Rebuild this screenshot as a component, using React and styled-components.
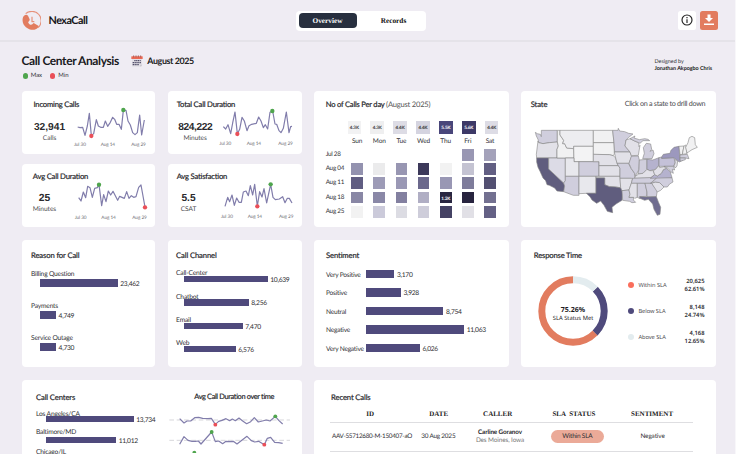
import React from "react";
import styled, { createGlobalStyle } from "styled-components";

const Global = createGlobalStyle`
  * { box-sizing: border-box; }
  html, body { margin: 0; padding: 0; overflow: hidden; }
  body {
    background: #efecf3;
    font-family: Lato, sans-serif;
    color: #252529;
    text-rendering: geometricPrecision;
  }
  button { text-rendering: geometricPrecision; }
`;

const serif = '"Liberation Serif", serif';
const noto = '"Noto Sans", sans-serif';
const indigo = "#4f4a7c";

const Page = styled.div`
  width: 736px;
  height: 454px;
  overflow: hidden;
  background: #efecf3;
  border-right: 1px solid #f8f7fa;
`;

const Text = styled.span`
  display: block;
  white-space: ${(p) => (p.$pre ? "pre" : "nowrap")};
  font-family: ${(p) => p.$font || "inherit"};
  font-size: ${(p) => p.$size}px;
  line-height: ${(p) => p.$line || 8}px;
  font-weight: ${(p) => p.$weight || 400};
  letter-spacing: ${(p) => p.$track || 0}px;
  color: ${(p) => p.$color || "#303035"};
  -webkit-text-stroke: ${(p) => p.$stroke || 0}px currentColor;
`;

/* Header */
const TopBar = styled.header`
  display: grid;
  grid-template-columns: 274px 1fr auto;
  height: 42px;
  padding: 11px 17px 0 21.5px;
  border-bottom: 2px solid #e5e3e9;
`;
const Brand = styled.div`
  display: flex;
  align-items: center;
  gap: 8.5px;
  height: 20px;
`;
const Tabs = styled.nav`
  display: flex;
  width: 130px;
  height: 20px;
  padding: 2.4px 3px;
  background: #fff;
  border-radius: 4px;
`;
const Tab = styled.button`
  flex: 0 0 ${(p) => p.$width}px;
  height: 15px;
  padding: 0;
  border: 0;
  border-radius: 4px;
  background: ${(p) => (p.$active ? "#28303f" : "transparent")};
  color: ${(p) => (p.$active ? "#fff" : "#111")};
  font: bold 7.3px/14px ${serif};
`;
const Actions = styled.div`
  display: flex;
  gap: 3.8px;
`;
const ActionButton = styled.button`
  display: grid;
  place-items: center;
  width: 18.2px;
  height: 18.8px;
  padding: 0;
  border: 0;
  border-radius: 2.5px;
  background: ${(p) => (p.$primary ? "#e27c5f" : "#fff")};
`;

/* Title strip */
const Heading = styled.section`
  display: flex;
  justify-content: space-between;
  height: 49px;
  padding: 10px 22px 0 21.5px;
`;
const TitleRow = styled.div`
  display: flex;
  align-items: center;
  height: 17px;
`;
const MonthPick = styled.div`
  display: flex;
  align-items: center;
  gap: 4px;
  margin-left: 12.5px;
`;
const MarkerLegend = styled.div`
  display: flex;
  align-items: center;
  margin-top: 3px;
  padding-left: 1px;
  height: 8px;
`;
const Dot = styled.i`
  flex: none;
  width: ${(p) => p.$d}px;
  height: ${(p) => p.$d}px;
  border-radius: 50%;
  background: ${(p) => p.$color};
  margin-right: ${(p) => p.$gap || 0}px;
  margin-left: ${(p) => p.$before || 0}px;
`;
const Credit = styled.div`
  width: 58.5px;
  padding-top: 6.5px;
`;

/* Cards */
const Board = styled.main`
  display: grid;
  grid-template-columns: 133.5px 134px 194.5px 195px;
  grid-template-rows: 62.5px 62.5px 127.5px 100px;
  column-gap: 12.5px;
  row-gap: 10.5px;
  padding-left: 21.5px;
`;
const Card = styled.article`
  grid-column: ${(p) => p.$col || "auto"};
  grid-row: ${(p) => p.$row || "auto"};
  margin-top: ${(p) => p.$drop || 0}px;
  margin-bottom: ${(p) => -(p.$drop || 0)}px;
  background: #fff;
  border-radius: 4px;
  padding: ${(p) => p.$pad || "0"};
  overflow: hidden;
`;
const CardHead = styled.div`
  display: flex;
  justify-content: space-between;
  height: ${(p) => p.$h || 14}px;
  padding-left: ${(p) => p.$indent || 0}px;
`;
const LightPart = styled.span`
  color: #555;
  -webkit-text-stroke: 0;
`;

const KpiBody = styled.div`
  display: grid;
  grid-template-columns: ${(p) => p.$split}px 80px;
`;
const KpiFigure = styled.div`
  width: 50px;
  margin-left: ${(p) => p.$indent}px;
  padding-top: ${(p) => p.$top}px;
  text-align: center;
`;
const KpiChart = styled.svg`
  display: block;
  margin-top: ${(p) => p.$lift}px;
  width: 80px;
  height: 43.33px;
  text { font: 14.2px Lato, sans-serif; letter-spacing: -0.3px; fill: #6d6d73; }
`;

/* Heatmap */
const TotalsRow = styled.div`
  display: grid;
  grid-template-columns: repeat(7, 22.9px);
  justify-items: center;
  margin: 9.5px 0 4.2px 17.2px;
`;
const DayRow = styled.div`
  display: grid;
  grid-template-columns: 20.4px repeat(7, 22.15px);
  justify-items: center;
  align-items: center;
  height: ${(p) => p.$h || 14.3}px;
  > :first-child { justify-self: start; }
`;
const HeatBody = styled.div`
  margin-top: 1.2px;
`;
const HeatCell = styled.div`
  display: grid;
  place-items: center;
  width: ${(p) => p.$size || 11.7}px;
  height: ${(p) => p.$size || 11.7}px;
  background: ${(p) => p.$fill};
  color: ${(p) => (p.$light ? "#fff" : "#333")};
  font-size: 4.6px;
  line-height: 6px;
  letter-spacing: -0.1px;
  -webkit-text-stroke: 0.12px currentColor;
`;

const MapSvg = styled.svg`
  display: block;
  width: 166.67px;
  height: 93.33px;
  margin: 14.8px 0 0 2.8px;
  path { stroke: #858585; stroke-width: 1.8; stroke-linejoin: round; }
`;

/* Bars */
const StackedBar = styled.div`
  height: ${(p) => p.$pitch}px;
`;
const BarLine = styled.div`
  display: flex;
  align-items: center;
  height: ${(p) => p.$h}px;
  margin-top: ${(p) => p.$lift || 0}px;
  margin-left: ${(p) => p.$indent || 0}px;
`;
const Bar = styled.div`
  flex: none;
  width: ${(p) => p.$w}px;
  height: 100%;
  margin-right: 2.6px;
  background: ${indigo};
`;
const BarValue = styled(Text)`
  padding-top: 1.4px;
`;
const SentimentRow = styled.div`
  display: grid;
  grid-template-columns: 40.1px 1fr;
  align-items: center;
  height: 18.55px;
`;

/* Response time */
const Response = styled.div`
  display: grid;
  grid-template-columns: 70px 1fr;
  column-gap: 20.6px;
  padding-left: 4px;
`;
const Donut = styled.svg`
  width: 70px;
  height: 70px;
  margin-top: 14.3px;
  text { text-anchor: middle; fill: #1c1c1f; font-family: ${noto}; }
`;
const SlaRow = styled.div`
  display: grid;
  grid-template-columns: 10px 1fr auto;
  align-items: center;
  height: 26px;
  text-align: right;
  > :nth-child(2) { text-align: left; padding-top: 1px; }
`;
const SlaList = styled.div`
  padding: 10.2px 11.5px 0 0;
`;

/* Call centres */
const Centers = styled.div`
  display: grid;
  grid-template-columns: 132.3px 123.4px;
`;
const CenterCharts = styled.svg`
  display: block;
  width: 123.33px;
  height: 40.67px;
  margin-top: 8.8px;
`;

/* Table */
const TableRow = styled.div`
  display: grid;
  grid-template-columns: ${(p) => p.$cols};
  align-items: center;
  justify-items: center;
  height: ${(p) => p.$h}px;
  width: 363.3px;
  border-bottom: 1px solid #dedee1;
  text-align: center;
`;
const Pill = styled.span`
  width: 53.5px;
  height: 12.8px;
  border-radius: 7px;
  background: #ebaa98;
  display: grid;
  place-items: center;
`;

const purpleLine = { fill: "none", stroke: "#817dab", strokeWidth: 3.6, strokeLinejoin: "round" };

const kpis = [
  {
    title: "Incoming Calls", left: 12, value: "32,941", size: 10.2, track: 0, unit: "Calls", center: 28, split: 50.2, row: 1, col: 1,
    box: "170 60 240 130", labelY: 182, labels: [[176, "Jul 30"], [256, "Aug 14"], [348, "Aug 29"]],
    line: "187,126 194,128 202,127 209,151 216,123 222,85 228,152 235,146 243,104 249,123 256,127 264,127 270,108 277,124 285,112 292,97 298,103 304,118 311,118 318,133 324,76 332,76 338,108 345,120 352,143 359,149 366,143 373,90 379,150 387,105",
    max: [324, 75], min: [228, 153],
  },
  {
    title: "Total Call Duration", left: 9.2, value: "824,222", size: 10.2, track: -0.4, unit: "Minutes", center: 27.7, split: 49.2, row: 1, col: 2,
    box: "170 60 240 130", labelY: 180, labels: [[177, "Jul 30"], [259, "Aug 14"], [354, "Aug 29"]],
    line: "189,125 196,132 203,119 211,146 217,114 224,81 231,146 238,133 245,97 252,108 260,137 266,122 274,118 288,115 295,96 302,108 309,128 315,119 322,132 329,82 337,78 344,117 349,118 356,137 362,143 369,130 378,81 386,143 391,125 395,124",
    max: [336, 78], min: [231, 147],
  },
  {
    title: "Avg Call Duration", left: 11.3, value: "25", size: 10.3, track: 0, unit: "Minutes", center: 23, split: 50.2, row: 2, col: 1,
    box: "170 285 240 130", labelY: 401, labels: [[178, "Jul 30"], [258, "Aug 14"], [351, "Aug 29"]],
    line: "190,338 197,348 204,321 211,338 217,304 224,308 231,337 238,310 246,308 251,299 259,362 265,329 272,350 279,318 286,330 293,319 307,346 313,334 327,340 334,320 341,340 348,332 355,337 362,335 370,307 377,300 389,366",
    max: [251, 299], min: [389, 367],
  },
  {
    title: "Avg Satisfaction", left: 9.2, value: "5.5", size: 10.2, track: 0, unit: "CSAT", center: 21, split: 49.2, row: 2, col: 2,
    box: "170 285 240 130", labelY: 398, labels: [[182, "Jul 30"], [262, "Aug 14"], [356, "Aug 29"]],
    line: "194,364 202,337 208,350 215,330 222,361 229,339 236,352 243,352 249,321 257,318 264,332 270,302 277,330 283,298 291,363 298,320 305,336 311,311 319,354 331,298 338,337 345,344 357,342 367,335 374,353 381,340 387,340 395,354",
    max: [331, 298], min: [291, 364],
  },
];

const Title = ({ children, size = 7.7, track = -0.14 }) => (
  <Text $size={size} $line={14} $track={track} $stroke={0.18} $color="#232327">{children}</Text>
);
const Value = ({ children }) => <BarValue $size={6.7} $track={-0.3} $color="#2c2c30">{children}</BarValue>;
const Label = ({ children }) => <Text $size={6.7} $track={-0.2}>{children}</Text>;

function Kpi({ k }) {
  const first = k.row === 1;
  return (
    <Card $col={k.col} $row={k.row} $pad={`${first ? 6 : 4.8}px 0 0 0`}>
      <CardHead $h={14} $indent={k.left}><Title track={-0.22}>{k.title}</Title></CardHead>
      <KpiBody $split={k.split}>
        <KpiFigure $indent={k.center - 25} $top={10.5}>
          <Text $font='"Liberation Sans", sans-serif' $size={k.size} $line={12} $weight={700} $track={k.track} $color="#2b2b2e">{k.value}</Text>
          <Text $size={6.6} $line={9} $track={-0.05} $color="#4c4c50">{k.unit}</Text>
        </KpiFigure>
        <KpiChart $lift={first ? -6 : -2.8} viewBox={k.box}>
          <polyline points={k.line} {...purpleLine} />
          <circle cx={k.max[0]} cy={k.max[1]} r="6.5" fill="#4fa54d" />
          <circle cx={k.min[0]} cy={k.min[1]} r="6.5" fill="#ea4f58" />
          {k.labels.map(([x, t]) => <text key={t} x={x} y={k.labelY}>{t}</text>)}
        </KpiChart>
      </KpiBody>
    </Card>
  );
}

const totals = [
  ["4.3K", "#f2f2f3"], ["4.3K", "#efeff0"], ["4.4K", "#dddce5"], ["4.4K", "#d5d4e0"],
  ["5.5K", "#49467a"], ["5.6K", "#3d3967"], ["4.4K", "#dddce5"],
];
const days = ["Sun", "Mon", "Tue", "Wed", "Thu", "Fri", "Sat"];
const weeks = [
  ["Jul 28", [null, null, null, null, null, "#9997b3", "#a4a2ba"]],
  ["Aug 04", ["#9392af", "#ebebec", "#9896b2", "#3c395a", "#f2f2f2", "#c4c3d2", "#625f83"]],
  ["Aug 11", ["#605d82", "#9d9bb7", "#9a98b5", "#6b688c", "#9997b4", "#7e7c9b", "#535072"]],
  ["Aug 18", ["#8987a5", "#8a88a7", "#8380a0", "#b0aec4", "#292641", "#28243f", "#737090"]],
  ["Aug 25", ["#f2f2f2", "#cbcada", "#dcdce3", "#cecdda", "#454264", "#e1e0e6", "#646185"]],
];

const mid = "#d0cedd", pale = "#e2e1e8", faint = "#f1f1f2", dark = "#605d7e";
const states = [
  ["WA", mid, "62,139 68,143 77,145 80,152 80,133 128,133 128,168 104,170 85,173 72,170 70,160 65,150"],
  ["OR", pale, "70,165 72,170 85,173 104,170 128,168 131,180 127,190 127,216 66,216 65,205"],
  ["CA", dark, "66,216 102,216 102,249 147,291 150,300 147,317 127,315 120,306 104,298 97,296 93,284 85,276 76,256 70,244 66,228"],
  ["NV", "#dcdbe6", "102,216 152,216 152,284 147,291 102,249"],
  ["ID", faint, "128,133 136,133 136,147 147,163 144,173 150,173 156,186 177,188 178,216 127,216 127,190 131,180 128,168"],
  ["MT", "#ededf0", "136,133 236,133 236,181 177,181 177,188 156,186 150,173 144,173 147,163 136,147"],
  ["WY", "#f3f3f4", "177,181 236,181 236,227 178,227"],
  ["UT", "#e8e8ed", "152,216 178,216 178,227 193,227 193,271 152,271"],
  ["CO", mid, "193,227 253,227 253,271 193,271"],
  ["AZ", mid, "152,271 193,271 193,328 176,328 147,317 150,300 147,291 152,284"],
  ["NM", "#e8e8ed", "193,271 244,271 244,322 215,322 193,323"],
  ["ND", faint, "236,133 294,133 298,170 236,170"],
  ["SD", faint, "236,170 298,170 299,204 296,209 284,206 236,205"],
  ["NE", pale, "236,205 284,206 296,209 303,216 310,239 253,239 253,227 236,227"],
  ["KS", pale, "253,239 312,239 316,247 316,271 253,271"],
  ["OK", pale, "244,271 316,271 318,305 302,303 284,302 270,296 270,276 244,276"],
  ["TX", dark, "244,276 270,276 270,296 284,302 302,303 320,306 324,322 322,343 304,354 292,364 294,380 278,376 268,358 258,345 246,352 232,342 226,332 215,322 244,322"],
  ["MN", mid, "294,133 310,133 311,127 315,135 330,137 342,142 355,144 342,154 334,162 331,180 346,198 300,198 298,170"],
  ["IA", pale, "299,198 346,198 351,212 343,232 307,232 303,216"],
  ["MO", mid, "307,232 341,232 350,248 360,262 361,276 354,282 350,277 316,277 316,247"],
  ["AR", pale, "316,277 354,277 350,292 343,312 322,314 318,305"],
  ["LA", mid, "322,314 343,312 346,325 343,334 357,334 356,342 363,349 352,350 345,346 324,343"],
  ["WI", pale, "334,162 346,158 360,165 372,170 373,182 376,178 371,208 350,209 346,198 331,180"],
  ["IL", mid, "350,211 371,210 374,222 373,250 362,271 360,262 350,248 343,232"],
  ["UP", mid, "346,158 361,150 358,156 374,161 390,158 400,160 405,164 385,164 376,172 372,170 360,165"],
  ["MI", mid, "384,218 389,202 386,185 395,172 408,174 411,190 406,196 415,192 418,203 412,218"],
  ["IN", mid, "374,222 397,220 397,250 385,262 370,264 373,250"],
  ["OH", "#b5b2ce", "397,220 414,222 433,215 433,238 423,250 405,254 397,250"],
  ["KY", pale, "362,271 372,264 385,262 397,250 405,254 416,254 420,266 407,276 360,277"],
  ["TN", mid, "354,277 427,274 419,283 407,292 350,292"],
  ["MS", pale, "350,292 368,292 368,334 360,337 357,334 343,334 346,325 343,312"],
  ["AL", mid, "368,292 391,292 397,318 396,331 375,332 376,338 368,334"],
  ["GA", mid, "391,292 411,292 428,314 425,332 397,333 397,318"],
  ["FL", "#706d90", "375,332 396,333 425,332 432,350 438,364 436,385 428,388 418,370 414,354 401,340 390,343 376,337"],
  ["SC", pale, "411,292 422,288 435,290 448,303 438,313 428,318"],
  ["NC", mid, "407,292 419,283 427,274 472,275 475,288 465,294 458,303 448,303 435,290 422,288"],
  ["VA", "#b5b2ce", "407,277 420,266 428,270 440,262 446,251 455,247 467,258 472,275"],
  ["WV", pale, "416,254 423,250 433,238 435,245 448,242 455,247 446,251 440,262 428,270 420,266"],
  ["PA", "#c4c1d8", "433,215 441,213 441,217 477,215 482,228 477,241 433,241"],
  ["NY", "#9c98be", "441,213 446,205 466,202 469,193 478,184 493,181 496,222 505,222 494,228 477,215 441,217"],
  ["MD", mid, "448,241 477,241 480,252 473,250 476,262 468,257 460,247"],
  ["NJ", pale, "480,220 489,225 487,240 482,246 478,240 482,230"],
  ["VT", faint, "493,181 508,180 503,205 496,206"],
  ["NH", faint, "508,180 513,177 517,203 503,205"],
  ["MA", mid, "496,207 518,205 523,218 512,216 496,216"],
  ["CT", mid, "496,216 512,216 512,221 497,226"],
  ["ME", faint, "513,184 520,170 524,155 532,151 540,155 542,176 548,184 532,191 517,201"],
];

function StackedBars({ rows, pitch, h, lift, indent }) {
  return rows.map(([name, w, v, rowLift, rowPitch]) => (
    <StackedBar key={name} $pitch={rowPitch ?? pitch}>
      <Label>{name}</Label>
      {w && <BarLine $h={h} $lift={rowLift ?? lift} $indent={indent}><Bar $w={w} /><Value>{v}</Value></BarLine>}
    </StackedBar>
  ));
}

const circumference = 2 * Math.PI * 31.2;
function Arc({ from, size, color }) {
  return (
    <circle cx="35" cy="35" r="31.2" fill="none" stroke={color} strokeWidth="7"
      strokeDasharray={`${size * circumference} ${circumference}`} transform={`rotate(${from * 360 - 90} 35 35)`} />
  );
}

const Mark = styled.svg`
  flex: none;
  margin: 0 -0.5px 0 0;
`;

function Logo() {
  return (
    <Mark width="19" height="20" viewBox="1 1 57 60">
      <path d="M12 9A27 27 0 1 1 49 51" fill="none" stroke="#e6927c" strokeWidth="3.4" />
      <path d="M4 20C7 12 15 10 19 15l5 11c1 5-6 6-4 10 2 5 8 8 12 5l4-4 14 8c3 3-3 9-8 11C25 63-4 45 4 20Z" fill="#e27c5f" />
      <path d="M31 18v15h7" fill="none" stroke="#e6927c" strokeWidth="3.6" />
    </Mark>
  );
}

function CalendarIcon() {
  return (
    <svg width="12" height="12" viewBox="0 0 36 36">
      <rect x="3" y="4" width="30" height="31" rx="2" fill="#e2dfe6" />
      <path d="M1 4h34v8H1z" fill="#ea6a55" />
      <path d="M8 1v6M15 1v6M22 1v6M29 1v6" stroke="#953f3d" strokeWidth="2" />
      <path d="M10 17h19M5 23h25M5 29h19" stroke="#45425f" strokeWidth="3.8" strokeDasharray="3.8 1.8" />
      <path d="M28 35v-6h6Z" fill="#c2c0c9" />
    </svg>
  );
}

export default function App() {
  return (
    <Page>
      <Global />
      <TopBar>
        <Brand>
          <Logo />
          <Text $size={10.8} $line={20} $weight={700} $track={-0.5} $color="#151517">NexaCall</Text>
        </Brand>
        <Tabs>
          <Tab $active $width={58}>Overview</Tab>
          <Tab $width={74}>Records</Tab>
        </Tabs>
        <Actions>
          <ActionButton aria-label="Information">
            <svg width="12" height="12" viewBox="0 0 24 24" fill="none" stroke="#222" strokeWidth="2.3">
              <circle cx="12" cy="12" r="10" /><path d="M12 10.5V18M12 6v2.4" />
            </svg>
          </ActionButton>
          <ActionButton $primary aria-label="Download">
            <svg width="12" height="12" viewBox="0 0 24 24" fill="#fff">
              <path d="M9 1h6v7h5l-8 8-8-8h5Z" /><path d="M2 19h20v3H2z" />
            </svg>
          </ActionButton>
        </Actions>
      </TopBar>

      <Heading>
        <div>
          <TitleRow>
            <Text $size={12} $line={17} $weight={700} $track={-0.4} $color="#1a1a1d">Call Center Analysis</Text>
            <MonthPick>
              <CalendarIcon />
              <Text $size={8.9} $line={17} $weight={700} $track={-0.4} $color="#222">August 2025</Text>
            </MonthPick>
          </TitleRow>
          <MarkerLegend>
            <Dot $d={5.3} $color="#4fa54d" $gap={3} /><Text $size={6} $track={-0.1}>Max</Text>
            <Dot $d={5.3} $color="#ea4f58" $before={8} $gap={3} /><Text $size={6}>Min</Text>
          </MarkerLegend>
        </div>
        <Credit>
          <Text $size={5.4} $line={7}>Designed by</Text>
          <Text $size={5.4} $line={7} $weight={700} $track={-0.04} $color="#222">Jonathan Akpogbo Chris</Text>
        </Credit>
      </Heading>

      <Board>
        {kpis.map((k) => <Kpi key={k.title} k={k} />)}

        <Card $col="3" $row="1 / 3" $pad="6px 0 0 11.7px">
          <CardHead>
            <Title size={7.6} track={-0.22}>No of Calls Per day <LightPart>(August 2025)</LightPart></Title>
          </CardHead>
          <TotalsRow>
            {totals.map(([v, c], i) => <HeatCell key={i} $size={13.5} $fill={c} $light={i === 4 || i === 5}>{v}</HeatCell>)}
          </TotalsRow>
          <DayRow $h={8.2}>
            <span />
            {days.map((d) => <Text key={d} $size={6.5} $track={-0.1}>{d}</Text>)}
          </DayRow>
          <HeatBody>
            {weeks.map(([w, cells]) => (
              <DayRow key={w}>
                <Text $size={6.3} $track={-0.25}>{w}</Text>
                {cells.map((c, i) => c
                  ? <HeatCell key={i} $fill={c} $light>{w === "Aug 18" && i === 4 ? "1.2K" : ""}</HeatCell>
                  : <span key={i} />)}
              </DayRow>
            ))}
          </HeatBody>
        </Card>

        <Card $col="4" $row="1 / 3" $pad="6px 10.7px 0 9.7px">
          <CardHead>
            <Title>State</Title>
            <Text $size={7.2} $line={14} $track={-0.3} $color="#4c4c50">Click on a state to drill down</Text>
          </CardHead>
          <MapSvg viewBox="55 120 500 280">
            {states.map(([id, fill, pts]) => <path key={id} fill={fill} d={`M${pts}Z`} />)}
          </MapSvg>
        </Card>

        <Card $col="1" $row="3" $drop={2.5} $pad="8px 0 0 9.5px">
          <CardHead $h={22.4}><Title>Reason for Call</Title></CardHead>
          <StackedBars pitch={32} h={7.6} lift={1.4} indent={9.3}
            rows={[["Billing Question", 77.4, "23,462"], ["Payments", 15.7, "4,749"], ["Service Outage", 15.7, "4,730"]]} />
        </Card>

        <Card $col="2" $row="3" $drop={2.5} $pad="8px 0 0 8.6px">
          <CardHead $h={21.8}><Title>Call Channel</Title></CardHead>
          <StackedBars pitch={23.4} h={6.4} lift={-1.4} indent={7.6}
            rows={[["Call-Center", 84, "10,639"], ["Chatbot", 65, "8,256"], ["Email", 59, "7,470"], ["Web", 52, "6,576"]]} />
        </Card>

        <Card $col="3" $row="3" $drop={2.5} $pad="8px 0 0 12px">
          <CardHead $h={17.2}><Title>Sentiment</Title></CardHead>
          {[["Very Positive", 28.3, "3,170"], ["Positive", 34.7, "3,928"], ["Neutral", 77.4, "8,754"], ["Negative", 98, "11,063"], ["Very Negative", 53.7, "6,026"]].map(([n, w, v]) => (
            <SentimentRow key={n}>
              <BarValue $size={6.6} $track={-0.22}>{n}</BarValue>
              <BarLine $h={8.7}><Bar $w={w} /><Value>{v}</Value></BarLine>
            </SentimentRow>
          ))}
        </Card>

        <Card $col="4" $row="3" $drop={2.5} $pad="8px 0 0 12.8px">
          <CardHead><Title track={-0.2}>Response Time</Title></CardHead>
          <Response>
            <Donut viewBox="0 0 70 70">
              <Arc from={0.3739} size={0.6261} color="#e27c5f" />
              <Arc from={0.1265} size={0.2474} color={indigo} />
              <Arc from={0} size={0.1265} color="#e3ecef" />
              <text x="35" y="35.8" fontSize="7" fontWeight="700">75.26%</text>
              <text x="35" y="43.5" fontSize="5.8">SLA Status Met</text>
            </Donut>
            <SlaList>
              {[["Within SLA", "20,625", "62.61%", "#fa6e5c"], ["Below SLA", "8,148", "24.74%", indigo], ["Above SLA", "4,168", "12.65%", "#e3ecef"]].map(([n, a, b, c]) => (
                <SlaRow key={n}>
                  <Dot $d={6} $color={c} $before={-0.6} />
                  <Text $size={5.7} $font={noto} $color="#4c4c50" $track={-0.03}>{n}</Text>
                  <div>
                    <Text $size={5.8} $font={noto} $weight={600}>{a}</Text>
                    <Text $size={5.8} $font={noto} $weight={600}>{b}</Text>
                  </div>
                </SlaRow>
              ))}
            </SlaList>
          </Response>
        </Card>

        <Card $col="1 / 3" $row="4" $drop={4.5} $pad="10.5px 0 0 14.5px">
          <Centers>
            <div>
              <CardHead $h={19.8}><Title>Call Centers</Title></CardHead>
              <StackedBars pitch={18.5} h={5.8} lift={-1.6} indent={10.3}
                rows={[["Los Angeles/CA", 87.4, "13,734"], ["Baltimore/MD", 69.8, "11,012", 0.8, 20], ["Chicago/IL"]]} />
            </div>
            <div>
              <CardHead $indent={26}><Title size={7.4} track={-0.35}>Avg Call Duration over time</Title></CardHead>
              <CenterCharts viewBox="460 130 370 122">
                <path d="M464 151H826M464 212H826" stroke="#cfcfd4" strokeWidth="2.5" strokeDasharray="14 8" />
                <polyline {...purpleLine} points="495,147 508,160 517,154 528,154 540,144 552,143 564,146 580,147 590,146 602,164 612,155 622,152 634,147 645,153 653,148 662,153 673,145 684,154 696,162 708,156 719,144 731,157 743,154 755,151 766,154 782,140 793,153 804,163" />
                <polyline {...purpleLine} points="495,224 508,201 520,212 532,215 542,215 551,214 559,223 591,187 602,216 612,214 624,222 634,215 646,216 656,215 667,223 697,200 710,213 720,217 732,215 749,225 758,206 768,203 780,218 792,219 804,221" />
                <circle cx="782" cy="140" r="5.8" fill="#4fa54d" /><circle cx="602" cy="165" r="5.8" fill="#ea4f58" />
                <circle cx="591" cy="187" r="5.8" fill="#4fa54d" /><circle cx="749" cy="225" r="5.8" fill="#ea4f58" />
                <circle cx="539" cy="249" r="5.8" fill="#4fa54d" />
              </CenterCharts>
            </div>
          </Centers>
        </Card>

        <Card $col="3 / 5" $row="4" $drop={4.5} $pad="10.5px 0 0 15.7px">
          <CardHead $h={15.5} $indent={1.4}><Title>Recent Calls</Title></CardHead>
          <TableRow $h={17} $cols="81px 56px 62px 90.4px 66px">
            {["ID", "DATE", "CALLER", "SLA  STATUS", "SENTIMENT"].map((h) => (
              <Text key={h} $font={serif} $size={7} $weight={700} $pre $color="#222">{h}</Text>
            ))}
          </TableRow>
          <TableRow $h={29.4} $cols="84.6px 48px 75.4px 79.4px 71px">
            <Text $size={6.3} $track={-0.28}>AAV-55712680-M-150407-aO</Text>
            <Text $size={6.4} $track={-0.2}>30 Aug 2025</Text>
            <div>
              <Text $size={6.3} $weight={700} $track={-0.1} $color="#222">Carline Goranov</Text>
              <Text $size={6.4} $track={-0.1} $color="#777">Des Moines, Iowa</Text>
            </div>
            <Pill><Text $size={6.5} $track={-0.2}>Within SLA</Text></Pill>
            <Text $size={6.4} $track={-0.1}>Negative</Text>
          </TableRow>
        </Card>
      </Board>
    </Page>
  );
}
